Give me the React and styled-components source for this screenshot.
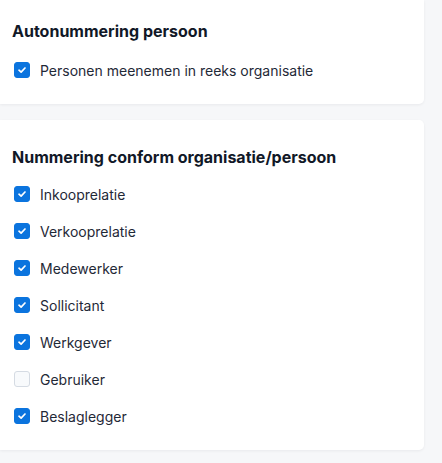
import React, { useState } from 'react';
import styled, { createGlobalStyle } from 'styled-components';

const GlobalStyle = createGlobalStyle`
  body {
    margin: 0;
    background: #f6f7f9;
    font-family: 'Inter', 'Noto Sans', sans-serif;
  }
`;

const Page = styled.div`
  width: 424px;
  display: flex;
  flex-direction: column;
  gap: 16px;
  padding-bottom: 13px;
`;

const Card = styled.section`
  background: #ffffff;
  border-radius: 0 0 5px 0;
  box-shadow: 0 1px 3px rgba(15, 23, 42, 0.06);
  padding: ${({ $top }) => $top}px 12px 24px 12px;

  & + & {
    border-radius: 0 5px 5px 0;
  }
`;

const Title = styled.h3`
  margin: 0 0 ${({ $gap }) => $gap}px 0;
  font-size: 16px;
  line-height: 20px;
  font-weight: 700;
  color: #111827;
`;

const List = styled.div`
  display: flex;
  flex-direction: column;
  gap: 17px;
`;

const Row = styled.label`
  display: flex;
  align-items: center;
  gap: 10px;
  height: 20px;
  font-size: 14px;
  color: #1f2937;
  cursor: pointer;
`;

const Box = styled.span`
  width: 16px;
  height: 16px;
  margin-left: 2px;
  box-sizing: border-box;
  border-radius: 3px;
  display: flex;
  align-items: center;
  justify-content: center;
  background: ${({ $on }) => ($on ? '#0b74de' : '#f8fafc')};
  border: 1px solid ${({ $on }) => ($on ? '#0b74de' : '#d5dbe3')};
`;

const Check = () => (
  <svg width="10" height="10" viewBox="0 0 10 10" fill="none">
    <path d="M2 5.2 L4.1 7.1 L8 3" stroke="#fff" strokeWidth="1.7" strokeLinecap="round" strokeLinejoin="round" />
  </svg>
);

const CheckRow = ({ label, checked, onToggle }) => (
  <Row onClick={onToggle}>
    <Box $on={checked}>{checked && <Check />}</Box>
    {label}
  </Row>
);

const App = () => {
  const [auto, setAuto] = useState(true);
  const [roles, setRoles] = useState([
    { label: 'Inkooprelatie', on: true },
    { label: 'Verkooprelatie', on: true },
    { label: 'Medewerker', on: true },
    { label: 'Sollicitant', on: true },
    { label: 'Werkgever', on: true },
    { label: 'Gebruiker', on: false },
    { label: 'Beslaglegger', on: true },
  ]);

  const toggle = (i) => {
    setRoles(roles.map((r, j) => (j === i ? { ...r, on: !r.on } : r)));
  };

  return (
    <>
      <GlobalStyle />
      <Page>
        <Card $top={21}>
          <Title $gap={19}>Autonummering persoon</Title>
          <List>
            <CheckRow label="Personen meenemen in reeks organisatie" checked={auto} onToggle={() => setAuto(!auto)} />
          </List>
        </Card>
        <Card $top={27}>
          <Title $gap={17}>Nummering conform organisatie/persoon</Title>
          <List>
            {roles.map((r, i) => (
              <CheckRow key={r.label} label={r.label} checked={r.on} onToggle={() => toggle(i)} />
            ))}
          </List>
        </Card>
      </Page>
    </>
  );
};

export default App;
